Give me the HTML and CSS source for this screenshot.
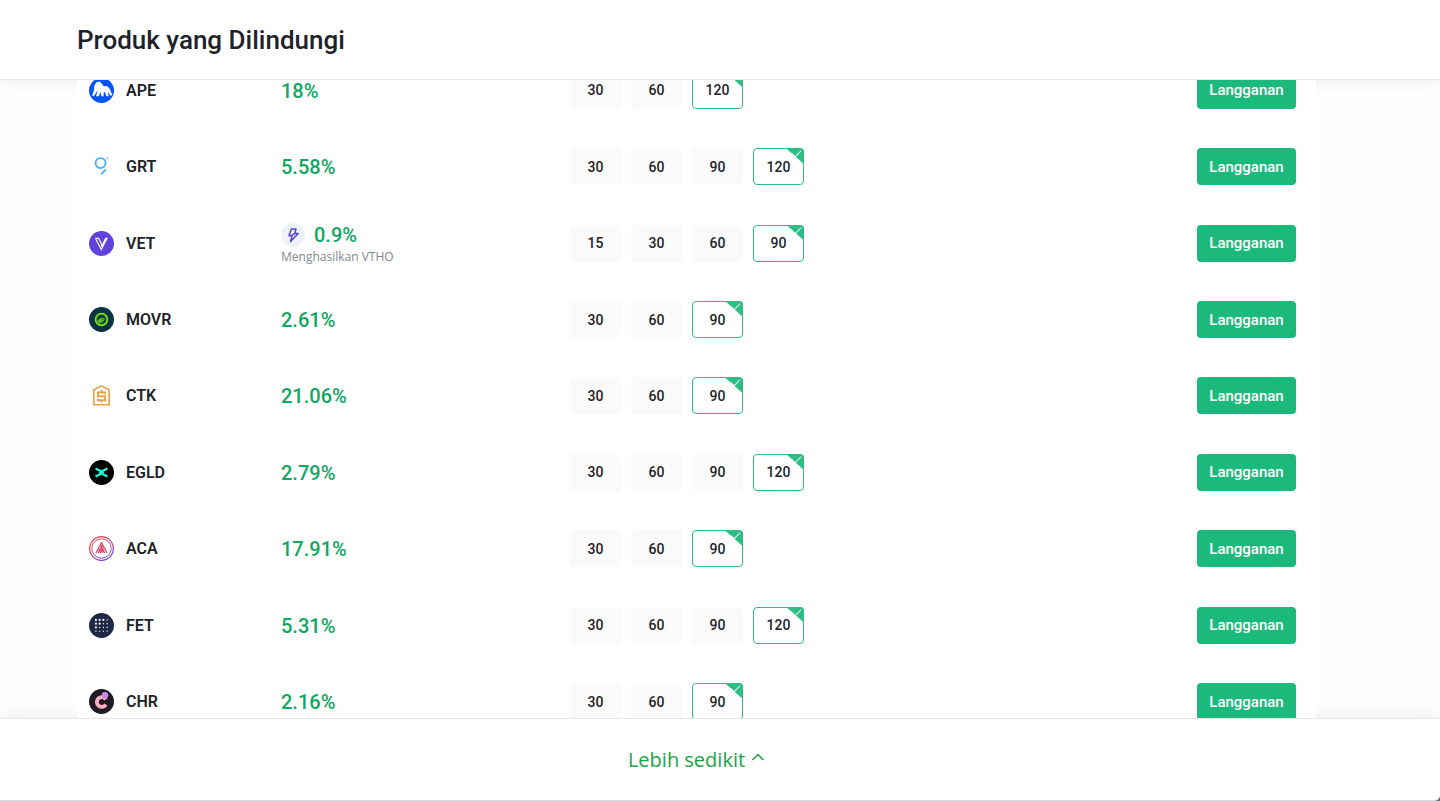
FILE: index.html
```html
<!DOCTYPE html>
<html lang="id">
<head>
    <meta charset="UTF-8">
    <meta name="viewport" content="width=device-width, initial-scale=1.0">
    <title>Produk yang Dilindungi</title>
    <link rel="stylesheet" href="styles.css">
</head>
<body>
    <header class="header">
        <h1>Produk yang Dilindungi</h1>
    </header>

    <main class="content">
        <div class="list">

            <div class="row">
                <div class="coin">
                    <svg viewBox="0 0 26 26"><circle cx="13" cy="13" r="13" fill="#0054f9"/><path d="M3.2 18.2l1.8-4.6.4-5.2L7.4 4.8l3.4-1.2 2.6 2.4 1.6 2.2 4 .5 2.5 2.5 2.7 6.6-1.8.6-2.8-4.2.8 4.8h-2.2l-1.6-4.3-1.3-.2-.1 4.5h-2.3l-1-4.5-1.7 4.6H7.2l1.8-5-1 .2-2.7 4.5z" fill="#fff"/></svg>
                    APE
                </div>
                <div class="rate">18%</div>
                <div class="terms">
                    <label class="term"><input type="radio" name="ape"><span>30</span></label>
                    <label class="term"><input type="radio" name="ape"><span>60</span></label>
                    <label class="term"><input type="radio" name="ape" checked><span>120</span></label>
                </div>
                <button class="btn" type="button">Langganan</button>
            </div>

            <div class="row">
                <div class="coin">
                    <svg viewBox="0 0 26 26" fill="none" stroke="#45b0f8" stroke-width="1.9" stroke-linecap="round"><circle cx="12" cy="9.4" r="5.2"/><path d="M17 16.6l-4 4"/><circle cx="19.2" cy="4.6" r="1" fill="#6bbcf8" stroke="none"/></svg>
                    GRT
                </div>
                <div class="rate">5.58%</div>
                <div class="terms">
                    <label class="term"><input type="radio" name="grt"><span>30</span></label>
                    <label class="term"><input type="radio" name="grt"><span>60</span></label>
                    <label class="term"><input type="radio" name="grt"><span>90</span></label>
                    <label class="term"><input type="radio" name="grt" checked><span>120</span></label>
                </div>
                <button class="btn" type="button">Langganan</button>
            </div>

            <div class="row">
                <div class="coin">
                    <svg viewBox="0 0 26 26"><circle cx="13" cy="13" r="13" fill="#5f43dc"/><path d="M6.8 7.7h2.6c.6 0 1 .3 1.2.8l2.8 6.1M6.8 7.7l6 11.6 6-11.6h-1.5l-4.4 8.6" fill="none" stroke="#fff" stroke-width="1.2"/></svg>
                    VET
                </div>
                <div class="rate">
                    <div class="rate-main">
                        <svg class="bolt" viewBox="0 0 24 24"><circle cx="12" cy="12" r="12" fill="#eff2f7"/><path d="M10.4 6h4.6l-1.3 4.4h3.5l-7.6 8.2 1.4-5.9H8z" fill="none" stroke="#5a3fd6" stroke-width="1.5" stroke-linejoin="round"/><path d="M10.5 12.6l3.4-2.2" stroke="#5a3fd6" stroke-width="1.5"/></svg>
                        0.9%
                    </div>
                    <div class="rate-note">Menghasilkan VTHO</div>
                </div>
                <div class="terms">
                    <label class="term"><input type="radio" name="vet"><span>15</span></label>
                    <label class="term"><input type="radio" name="vet"><span>30</span></label>
                    <label class="term"><input type="radio" name="vet"><span>60</span></label>
                    <label class="term"><input type="radio" name="vet" checked><span>90</span></label>
                </div>
                <button class="btn" type="button">Langganan</button>
            </div>

            <div class="row">
                <div class="coin">
                    <svg viewBox="0 0 26 26"><circle cx="13" cy="13" r="13" fill="#0b3340"/><circle cx="13" cy="13" r="6.1" fill="#153f28" stroke="#7ee61c" stroke-width="1.8"/><path d="M8.8 14.4c1.2-2.4 4.2-3.5 8-3.2-1 1-2.5 1.3-3.7 1.6 1.2.2 2.5 0 3.5-.2-1 2.2-2.9 4.2-5.8 4.5-1.3-.4-2.1-1.5-2-2.7z" fill="#57b822"/></svg>
                    MOVR
                </div>
                <div class="rate">2.61%</div>
                <div class="terms">
                    <label class="term"><input type="radio" name="movr"><span>30</span></label>
                    <label class="term"><input type="radio" name="movr"><span>60</span></label>
                    <label class="term"><input type="radio" name="movr" checked><span>90</span></label>
                </div>
                <button class="btn" type="button">Langganan</button>
            </div>

            <div class="row">
                <div class="coin">
                    <svg viewBox="0 0 26 26" fill="none" stroke="#e3a347" stroke-width="1.7"><path d="M5 22.6V7L13 3l8 4v15.6z"/><path d="M16.8 11.6V9.8H9.2v3.9h7.6v4.3H9.2v-1.9M13 7.4v2.4M13 18v2" stroke-width="2"/></svg>
                    CTK
                </div>
                <div class="rate">21.06%</div>
                <div class="terms">
                    <label class="term"><input type="radio" name="ctk"><span>30</span></label>
                    <label class="term"><input type="radio" name="ctk"><span>60</span></label>
                    <label class="term"><input type="radio" name="ctk" checked><span>90</span></label>
                </div>
                <button class="btn" type="button">Langganan</button>
            </div>

            <div class="row">
                <div class="coin">
                    <svg viewBox="0 0 26 26"><circle cx="13" cy="13" r="13" fill="#000"/><path d="M6.8 8.8L13 11.9l6.2-3.1M6.8 17.2l6.2-3.1 6.2 3.1" fill="none" stroke="#23f7dd" stroke-width="2.3"/><path d="M9.8 13l3.2-1.8 3.2 1.8-3.2 1.8z" fill="#23f7dd"/></svg>
                    EGLD
                </div>
                <div class="rate">2.79%</div>
                <div class="terms">
                    <label class="term"><input type="radio" name="egld"><span>30</span></label>
                    <label class="term"><input type="radio" name="egld"><span>60</span></label>
                    <label class="term"><input type="radio" name="egld"><span>90</span></label>
                    <label class="term"><input type="radio" name="egld" checked><span>120</span></label>
                </div>
                <button class="btn" type="button">Langganan</button>
            </div>

            <div class="row">
                <div class="coin">
                    <svg viewBox="0 0 26 26" fill="none">
                        <defs>
                            <linearGradient id="aca" x1="0" y1="0" x2=".6" y2="1"><stop offset=".3" stop-color="#f0384a"/><stop offset=".65" stop-color="#d63c80"/><stop offset="1" stop-color="#6c3df5"/></linearGradient>
                        </defs>
                        <circle cx="13" cy="13" r="12.3" stroke="url(#aca)" stroke-width="1.3"/>
                        <circle cx="13" cy="13" r="10.1" stroke="url(#aca)" stroke-width="1"/>
                        <path d="M7.2 17.6L13 7l5.8 10.6M9.6 17.6l4.2-7.6M11.9 17.6l2.9-5.2M16.4 17.6L12.3 10M14.3 14.4l-4.2.3M15.2 16.6h-4" stroke="#e2345f" stroke-width="1.2"/>
                    </svg>
                    ACA
                </div>
                <div class="rate">17.91%</div>
                <div class="terms">
                    <label class="term"><input type="radio" name="aca"><span>30</span></label>
                    <label class="term"><input type="radio" name="aca"><span>60</span></label>
                    <label class="term"><input type="radio" name="aca" checked><span>90</span></label>
                </div>
                <button class="btn" type="button">Langganan</button>
            </div>

            <div class="row">
                <div class="coin">
                    <svg viewBox="0 0 26 26"><circle cx="13" cy="13" r="13" fill="#1f2946"/><g fill="#fff"><circle cx="7.2" cy="7.2" r="1.1"/><circle cx="11.1" cy="7.2" r="1.1"/><circle cx="15" cy="7.2" r="1.1"/><circle cx="18.9" cy="7.2" r=".7"/><circle cx="7.2" cy="11.1" r="1.1"/><circle cx="11.1" cy="11.1" r="1.1"/><circle cx="15" cy="11.1" r=".7"/><circle cx="18.9" cy="11.1" r=".7"/><circle cx="7.2" cy="15" r="1.1"/><circle cx="11.1" cy="15" r=".7"/><circle cx="15" cy="15" r=".7"/><circle cx="18.9" cy="15" r=".7"/><circle cx="7.2" cy="18.9" r=".7"/><circle cx="11.1" cy="18.9" r=".6"/><circle cx="15" cy="18.9" r=".6"/><circle cx="18.9" cy="18.9" r=".6"/></g></svg>
                    FET
                </div>
                <div class="rate">5.31%</div>
                <div class="terms">
                    <label class="term"><input type="radio" name="fet"><span>30</span></label>
                    <label class="term"><input type="radio" name="fet"><span>60</span></label>
                    <label class="term"><input type="radio" name="fet"><span>90</span></label>
                    <label class="term"><input type="radio" name="fet" checked><span>120</span></label>
                </div>
                <button class="btn" type="button">Langganan</button>
            </div>

            <div class="row">
                <div class="coin">
                    <svg viewBox="0 0 26 26"><circle cx="13" cy="13" r="13" fill="#1f1a25"/><path d="M17.6 10.8a5.1 5.1 0 1 0 0 5.4" fill="none" stroke="#ffb0c1" stroke-width="4"/><circle cx="16.6" cy="6.4" r="3.4" fill="#c58be6"/></svg>
                    CHR
                </div>
                <div class="rate">2.16%</div>
                <div class="terms">
                    <label class="term"><input type="radio" name="chr"><span>30</span></label>
                    <label class="term"><input type="radio" name="chr"><span>60</span></label>
                    <label class="term"><input type="radio" name="chr" checked><span>90</span></label>
                </div>
                <button class="btn" type="button">Langganan</button>
            </div>

        </div>
    </main>

    <footer class="footer">
        <button class="less" type="button">
            Lebih sedikit
            <svg viewBox="0 0 14 10"><path d="M1.5 8L7 2.5 12.5 8" fill="none" stroke="currentColor" stroke-width="1.5"/></svg>
        </button>
    </footer>
</body>
</html>
```
FILE: styles.css
```css
* {
    box-sizing: border-box;
}

html {
    background: #6b6b70;
}

body {
    margin: 0;
    height: 100vh;
    display: flex;
    flex-direction: column;
    overflow: hidden;
    font-family: Roboto, "Open Sans", sans-serif;
    color: #1e2329;
    background: #fdfefe;
    border-bottom: 1px solid #dadbe2;
    border-bottom-right-radius: 6px;
}

.header,
.content,
.footer {
    padding: 0 124px 0 77px;
}

.header {
    display: flex;
    align-items: center;
    flex: 0 0 80px;
    border-bottom: 1px solid #e9e9e9;
    background: #fff;
    box-shadow: 0 1px 16px rgba(0, 0, 0, 0.08);
}

h1 {
    margin: 0;
    font-size: 26px;
    line-height: 32px;
    font-weight: 500;
}

.content {
    flex: 1;
    min-height: 0;
    overflow: hidden;
}

/* list is scrolled so the first and last rows are cut off */
.list {
    position: relative;
    display: grid;
    grid-auto-rows: 1fr;
    height: 688px;
    margin-top: -28px;
    background: #fff;
}

.row {
    display: grid;
    grid-template-columns: 192px 289px 1fr auto;
    align-items: center;
    padding: 0 20px 0 12px;
}

.coin {
    display: flex;
    align-items: center;
    gap: 12px;
    font-size: 16px;
    font-weight: 600;
}

.coin svg {
    width: 25px;
    height: 25px;
}

.rate {
    padding-top: 2px;
    font-size: 20px;
    line-height: 25px;
    font-weight: 500;
    color: #10a663;
}

.rate-main {
    display: flex;
    align-items: center;
    gap: 9px;
}

.bolt {
    width: 24px;
    height: 24px;
}

.rate-note {
    font-family: "Open Sans", sans-serif;
    font-size: 12px;
    line-height: 18px;
    font-weight: 400;
    color: #7f8793;
}

.terms {
    display: flex;
    gap: 10px;
}

.term {
    position: relative;
    cursor: pointer;
}

.term input {
    position: absolute;
    inset: 0;
    margin: 0;
    opacity: 0;
}

.term span {
    display: flex;
    align-items: center;
    justify-content: center;
    width: 51px;
    height: 37px;
    border: 1px solid #fafafa;
    border-radius: 4px;
    font-size: 14px;
    font-weight: 500;
    background: #fafafa;
}

.term input:checked + span {
    border-color: #2ebd85;
    background: #fff;
}

.term input:checked + span::before {
    content: "";
    position: absolute;
    top: 0;
    right: 0;
    width: 18px;
    height: 16px;
    border-top-right-radius: 4px;
    background: #2ebd85;
    clip-path: polygon(0 0, 100% 0, 100% 100%);
}

.term input:checked + span::after {
    content: "";
    position: absolute;
    top: 2px;
    right: 3px;
    width: 8px;
    height: 4px;
    border-left: 1px solid #fff;
    border-bottom: 1px solid #fff;
    transform: rotate(-45deg);
}

.btn {
    width: 99px;
    height: 37px;
    padding: 0;
    border: none;
    border-radius: 4px;
    font-family: Roboto, sans-serif;
    font-size: 15px;
    font-weight: 500;
    color: #fff;
    background: #1bba7c;
    cursor: pointer;
}

.footer {
    display: flex;
    align-items: center;
    justify-content: center;
    flex: 0 0 82px;
    border-top: 1px solid #e6e6e6;
    background: #fff;
    box-shadow: 0 -1px 16px rgba(0, 0, 0, 0.08);
}

.less {
    display: flex;
    align-items: center;
    gap: 6px;
    padding: 0;
    border: none;
    font-family: "Open Sans", sans-serif;
    font-size: 20px;
    line-height: 28px;
    color: #1ba345;
    background: none;
    cursor: pointer;
}

.less svg {
    width: 14px;
    height: 10px;
    margin-bottom: 6px;
}
```
